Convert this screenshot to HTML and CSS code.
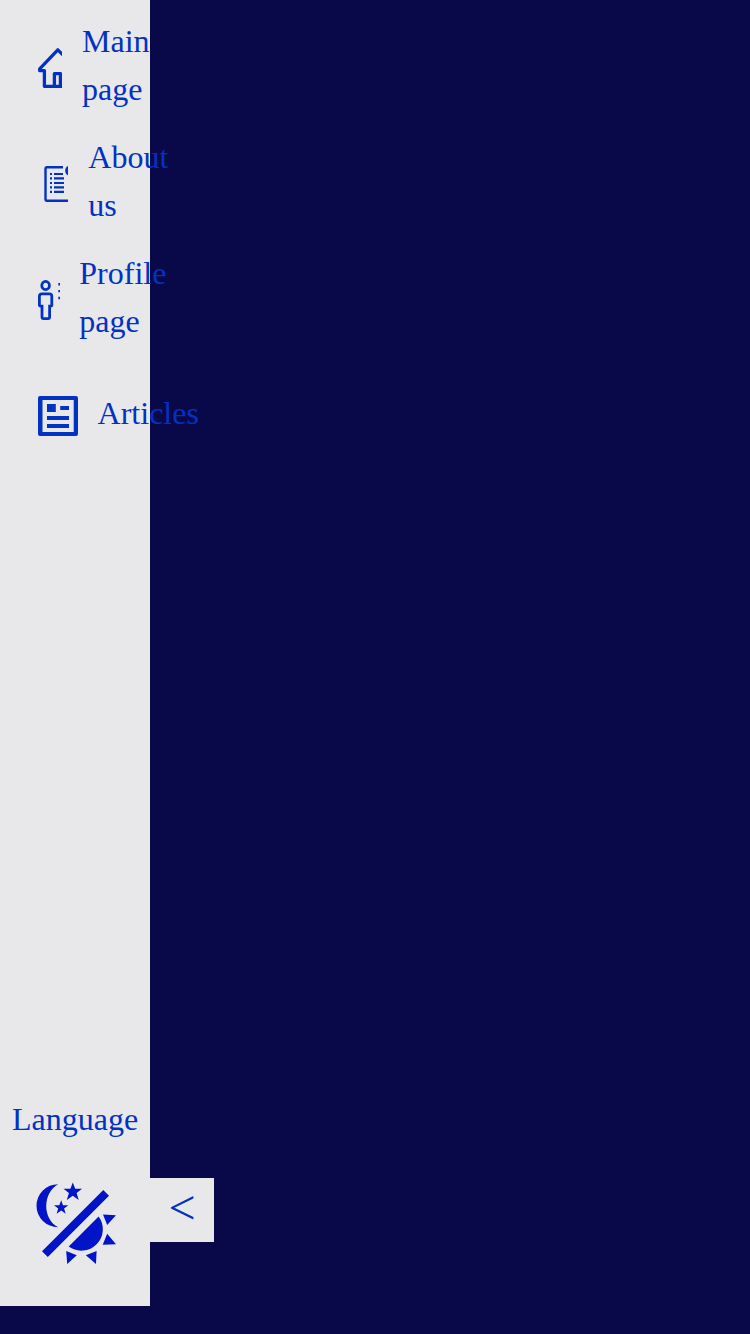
FILE: index.html
```html
<!DOCTYPE html>
<html lang="en">
<head>
<meta charset="utf-8">
<title>Main page</title>
<link rel="stylesheet" href="styles.css">
</head>
<body>
<aside class="sidebar">
  <nav class="menu">
    <a class="item item-main">
      <svg class="icon" width="24" height="40" viewBox="0 0 24 40" fill="none" stroke="currentColor" stroke-width="3.3" stroke-linejoin="round"><path d="M26 8 19.8 1.8 1.7 20.8V22.7H6.4V38.3H28M16.4 38V25.6H22.4V38"/></svg>
      <span class="label">Main page</span>
    </a>
    <a class="item item-about">
      <svg class="icon" width="24" height="40" viewBox="0 0 24 40"><path d="M19 3.3H3Q1.5 3.3 1.5 5V35Q1.5 36.7 3 36.7H24" fill="none" stroke="currentColor" stroke-width="2.4"/><path d="M24 2Q21.2 3 21.2 6.6T24 11.5Z" fill="currentColor"/><path d="M6 10h2M10 10h9M6 14.3h2M10 14.3h10M6 19h2M10 19h10M6 23.3h2M10 23.3h10M6 27.8h2M10 27.8h10" stroke="currentColor" stroke-width="2.2"/></svg>
      <span class="label">About us</span>
    </a>
    <a class="item item-profile">
      <svg class="icon" width="22" height="40" viewBox="0 0 22 40" fill="none" stroke="currentColor" stroke-width="2.8"><ellipse cx="7.6" cy="5.5" rx="3.8" ry="4.1"/><path d="M3.9 13.9H11.5Q13.8 13.9 13.8 16.3V25.2Q13.8 26.2 11.6 26.2V37Q11.6 38.6 10 38.6H5.5Q4 38.6 4 37V26.2Q1.4 26.2 1.4 25.2V16.3Q1.4 13.9 3.9 13.9Z"/><path d="M21.2 3v2.5M21.2 10v2.2M21.2 16.7v2.5" stroke-width="1.8"/></svg>
      <span class="label">Profile page</span>
    </a>
    <a class="item item-articles">
      <svg class="icon" width="40" height="40" viewBox="0 0 40 40" fill="currentColor"><path fill-rule="evenodd" d="M2 0H38Q40 0 40 2V38Q40 40 38 40H2Q0 40 0 38V2Q0 0 2 0ZM4.5 4V36H35.7V4Z"/><path d="M9 8h8.8v8H9zM22.2 10H31v4h-8.8zM9 20h22v4H9zM9 28h22v4H9z"/></svg>
      <span class="label">Articles</span>
    </a>
  </nav>
  <div class="footer">
    <span class="language">Language</span>
    <svg class="theme" width="84" height="84" viewBox="0 0 84 84" fill="currentColor"><path d="M24.2 3.2A21.7 21.5 0 0 0 24.2 46.2C8.3 38 8.3 12 24.2 3.2ZM38.8 1.5l2.4 6.3h6.9l-5.5 4.2 2.1 7-5.9-4.2-6 4.2 2.1-7L29.5 7.8h6.9ZM27.2 19.2l1.8 5h5.3l-4.2 3.2 1.6 5.4-4.5-3.2-4.6 3.2 1.6-5.4-4.2-3.2h5.3ZM69.3 9 75 14.8 13.8 76 8 70.2ZM64.6 35.4A21.5 21.5 0 0 1 34.7 65.6ZM69 33.5 82 34.2 73.2 44ZM73.2 52.8 82 63.2 68.7 63.7ZM32.2 70 42.8 74.2 33.2 83ZM51.8 74.3 62.6 70 62 83Z"/></svg>
  </div>
  <button class="toggle" aria-label="Collapse menu">&lt;</button>
</aside>
</body>
</html>
```
FILE: styles.css
```css
body {
  margin: 0;
  min-height: 1334px;
  background: #090949;
  font: 32px/48px "Liberation Serif", serif;
  color: #0232c2;
}
.sidebar {
  position: relative;
  box-sizing: border-box;
  width: 150px;
  height: 1306px;
  padding-top: 20px;
  display: flex;
  flex-direction: column;
  justify-content: space-between;
  background: #e8e8ea;
}
.menu {
  display: flex;
  flex-direction: column;
  gap: 20px;
}
.item {
  display: flex;
  align-items: center;
  gap: 20px;
  height: 96px;
  padding-left: 38px;
}
.item-about {
  padding-left: 44px;
}
.item-about .label {
  margin-left: 0.3px;
}
.item-profile {
  gap: 19.3px;
}
.item-articles {
  gap: 19.6px;
}
.icon {
  flex: none;
}
.label {
  padding-bottom: 7px;
}
.footer {
  display: flex;
  flex-direction: column;
  align-items: center;
  gap: 38px;
  padding-bottom: 41px;
}
.theme {
  color: #0114c8;
  margin-left: 1px;
}
.toggle {
  position: absolute;
  left: 150px;
  bottom: 64px;
  width: 64px;
  height: 64px;
  padding: 0 0 5px;
  border: 0;
  background: #e8e8ea;
  color: inherit;
  font: 48px/56px "Liberation Serif", serif;
}
```
